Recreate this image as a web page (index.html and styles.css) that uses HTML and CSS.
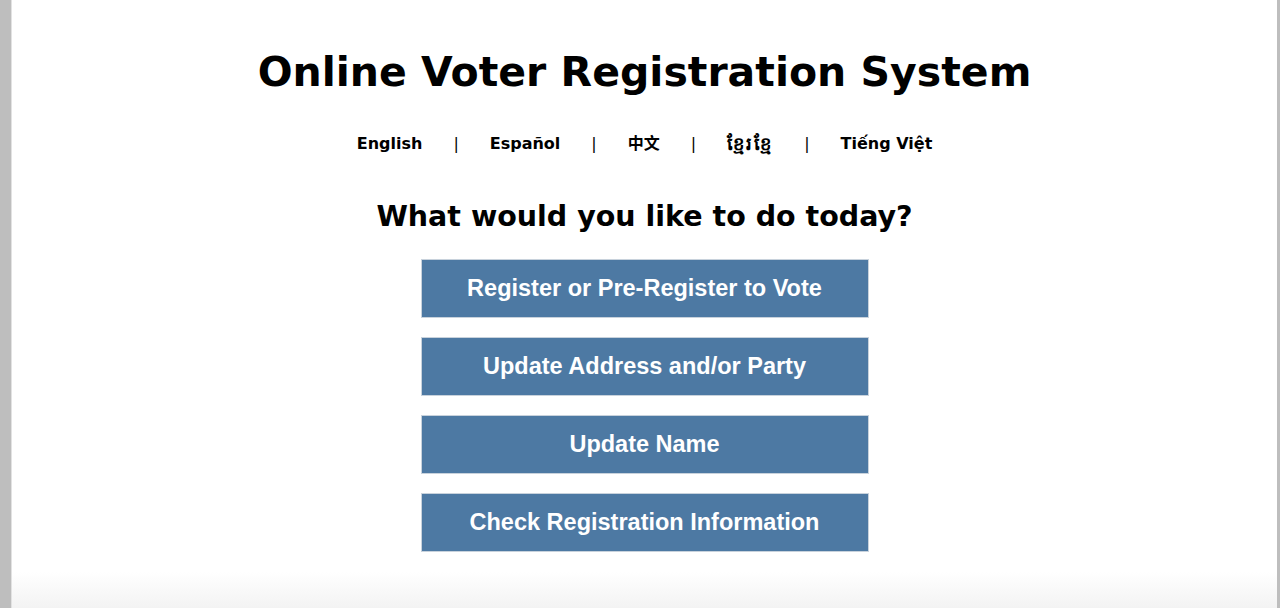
FILE: index.html
```html
<!DOCTYPE html>
<html lang="en">
<head>
<meta charset="utf-8">
<title>Online Voter Registration System</title>
<link rel="stylesheet" href="styles.css">
</head>
<body>
<div class="frame">
  <main class="page">
    <h1 class="title">Online Voter Registration System</h1>
    <nav class="langs">
      <a class="lang" href="#">English</a>
      <span class="sep">|</span>
      <a class="lang" href="#">Español</a>
      <span class="sep">|</span>
      <a class="lang" href="#">中文</a>
      <span class="sep">|</span>
      <a class="lang khmer" href="#">ខ្មែរខ្មែ</a>
      <span class="sep">|</span>
      <a class="lang" href="#">Tiếng Việt</a>
    </nav>
    <h2 class="question">What would you like to do today?</h2>
    <div class="actions">
      <a class="btn" href="#">Register or Pre-Register to Vote</a>
      <a class="btn" href="#">Update Address and/or Party</a>
      <a class="btn" href="#">Update Name</a>
      <a class="btn" href="#">Check Registration Information</a>
    </div>
  </main>
</div>
</body>
</html>
```
FILE: styles.css
```css
html, body {
  margin: 0;
  padding: 0;
  height: 100%;
}
body {
  background: #bebebe;
  font-family: "DejaVu Sans", Verdana, sans-serif;
  color: #000;
}
.frame {
  display: flex;
  height: 608px;
  padding-left: 11px;
  padding-right: 3px;
  box-sizing: border-box;
}
.page {
  flex: 1;
  border-left: 1px solid #e2e2e2;
  background: linear-gradient(to bottom, #ffffff 0, #ffffff 572px, #f3f3f3 608px);
  display: flex;
  flex-direction: column;
  align-items: center;
}
.title {
  margin: 48px 0 0;
  font-size: 41px;
  font-weight: bold;
  line-height: 48px;
}
.langs {
  margin-top: 37px;
  display: flex;
  align-items: center;
  font-size: 16px;
  font-weight: bold;
  line-height: 22px;
}
.lang {
  color: #000;
  text-decoration: none;
  font-family: "DejaVu Sans", "Noto Sans CJK SC", sans-serif;
}
.khmer {
  font-size: 18px;
  letter-spacing: 2px;
  line-height: 22px;
}
.sep {
  margin: 0 31px;
  font-weight: normal;
}
.question {
  margin: 45px 0 0;
  font-size: 28.5px;
  font-weight: bold;
  line-height: 34px;
}
.actions {
  margin-top: 25px;
  display: flex;
  flex-direction: column;
  gap: 19px;
}
.btn {
  box-sizing: border-box;
  width: 448px;
  height: 59px;
  display: flex;
  align-items: center;
  justify-content: center;
  background: #4d79a3;
  border: 1px solid #c8d2dc;
  color: #fff;
  font-family: "Liberation Sans", Arial, sans-serif;
  font-weight: bold;
  font-size: 23.5px;
  text-decoration: none;
}
```
